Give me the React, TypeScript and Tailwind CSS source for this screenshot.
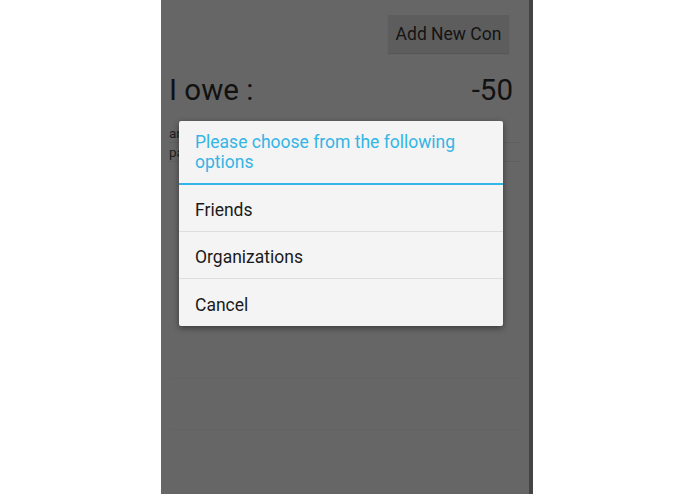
export default function App() {
  const options = ["Friends", "Organizations", "Cancel"];
  return (
    <div className="w-[695px] h-[494px] bg-white flex overflow-hidden" style={{ fontFamily: "Roboto, 'Noto Sans', sans-serif" }}>
      <div className="ml-[161px] w-[368px] h-full bg-[#666666] relative flex flex-col">
        {/* dimmed activity */}
        <div className="flex justify-end pt-[15px] pr-[20px]">
          <div className="w-[121px] h-[38px] bg-[#5d5d5d] flex items-center justify-center pt-[1px] text-[17.5px] text-[#141414] shadow-[0_1px_1px_rgba(0,0,0,0.15)]">
            Add New Con
          </div>
        </div>
        <div className="flex items-center justify-between px-[8px] mt-[17px] h-[40px] text-[29.5px] text-[#111111]">
          <span>I owe :</span>
          <span className="pr-[8px]">-50</span>
        </div>
        <div className="mt-[14px] px-[8px] flex flex-col text-[13.5px] text-[#1c1c1c]">
          <div className="h-[19px] leading-[19px] border-b border-[#5f5f5f]">amount</div>
          <div className="h-[19px] leading-[19px] border-b border-[#5f5f5f]">paid</div>
        </div>
        <div className="mt-[216px] mx-[8px] border-b border-[#636363]" />
        <div className="mt-[50px] mx-[8px] border-b border-[#636363]" />

        {/* dialog */}
        <div className="absolute left-[18px] top-[121px] w-[324px] bg-[#f4f4f4] rounded-[2px] shadow-[0_2px_6px_rgba(0,0,0,0.45)]">
          <div className="px-[16px] pt-[11px] pb-[11px] text-[17.5px] leading-[20px] text-[#33b5e5]">
            Please choose from the following options
          </div>
          <div className="h-[2px] bg-[#33b5e5]" />
          {options.map((o, i) => (
            <div
              key={o}
              className={
                "h-[47px] flex items-center px-[16px] pt-[5px] text-[17.5px] text-[#1a1a1a] " +
                (i < options.length - 1 ? "border-b border-[#dedede]" : "")
              }
            >
              {o}
            </div>
          ))}
        </div>
      </div>
      <div className="w-[4px] h-full bg-[#444444]" />
    </div>
  );
}
